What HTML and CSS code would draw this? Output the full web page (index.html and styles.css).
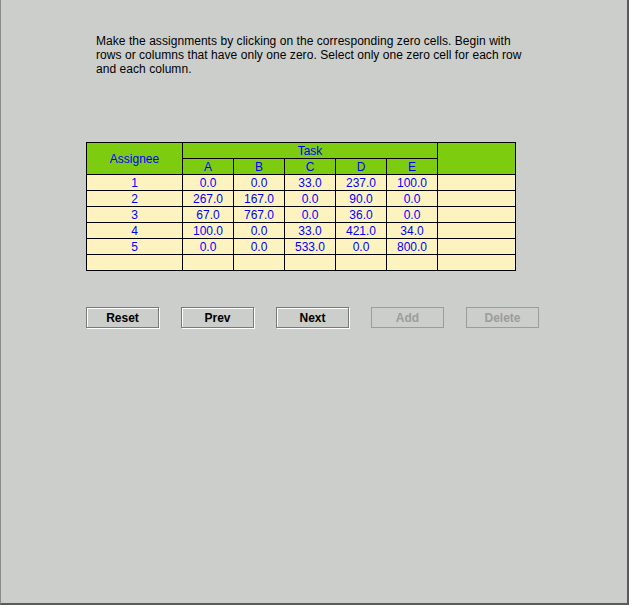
FILE: index.html
```html
<!DOCTYPE html>
<html>
<head>
<meta charset="utf-8">
<link rel="stylesheet" href="styles.css">
</head>
<body>
<div class="frame">
  <p class="intro">Make the assignments by clicking on the corresponding zero cells. Begin with<br>rows or columns that have only one zero. Select only one zero cell for each row<br>and each column.</p>
  <div class="grid">
    <div class="hd assignee">Assignee</div>
    <div class="hd task">Task</div>
    <div class="hd extra"></div>
    <div class="hd">A</div><div class="hd">B</div><div class="hd">C</div><div class="hd">D</div><div class="hd">E</div>

    <div class="c">1</div><div class="c">0.0</div><div class="c">0.0</div><div class="c">33.0</div><div class="c">237.0</div><div class="c">100.0</div><div class="c"></div>
    <div class="c">2</div><div class="c">267.0</div><div class="c">167.0</div><div class="c">0.0</div><div class="c">90.0</div><div class="c">0.0</div><div class="c"></div>
    <div class="c">3</div><div class="c">67.0</div><div class="c">767.0</div><div class="c">0.0</div><div class="c">36.0</div><div class="c">0.0</div><div class="c"></div>
    <div class="c">4</div><div class="c">100.0</div><div class="c">0.0</div><div class="c">33.0</div><div class="c">421.0</div><div class="c">34.0</div><div class="c"></div>
    <div class="c">5</div><div class="c">0.0</div><div class="c">0.0</div><div class="c">533.0</div><div class="c">0.0</div><div class="c">800.0</div><div class="c"></div>
    <div class="c"></div><div class="c"></div><div class="c"></div><div class="c"></div><div class="c"></div><div class="c"></div><div class="c"></div>
  </div>
  <div class="buttons">
    <button class="btn">Reset</button>
    <button class="btn">Prev</button>
    <button class="btn">Next</button>
    <button class="btn disabled">Add</button>
    <button class="btn disabled">Delete</button>
  </div>
</div>
</body>
</html>
```
FILE: styles.css
```css
html, body {
  margin: 0;
  padding: 0;
  background: #cccecb;
}
.frame {
  width: 629px;
  height: 605px;
  box-sizing: border-box;
  background: #cccecb;
  border-left: 1px solid #8a8a8a;
  border-right: 2px solid #5a5a5a;
  border-bottom: 2px solid #5a5a5a;
  padding-top: 34px;
  font-family: "Liberation Sans", Arial, sans-serif;
  font-size: 12px;
  overflow: hidden;
}
.intro {
  margin: 0 0 0 95px;
  line-height: 14px;
  color: #000;
  letter-spacing: 0.05px;
}
.grid {
  margin: 66px 0 0 85px;
  width: 430px;
  display: grid;
  grid-template-columns: 95px 50px 50px 50px 50px 50px 77px;
  grid-template-rows: repeat(8, 15px);
  gap: 1px;
  padding: 1px;
  box-sizing: border-box;
  background: #000;
}
.grid > div {
  color: #0000ff;
  text-align: center;
  line-height: 17px;
  white-space: nowrap;
  overflow: hidden;
}
.hd {
  background: #7ecc10;
}
.assignee {
  grid-row: 1 / 3;
  grid-column: 1;
  display: flex;
  align-items: center;
  justify-content: center;
  padding-top: 1px;
}
.task {
  grid-row: 1;
  grid-column: 2 / 7;
}
.extra {
  grid-row: 1 / 3;
  grid-column: 7;
}
.c {
  background: #fdf3c0;
}
.buttons {
  margin: 36px 0 0 85px;
  display: flex;
  gap: 22px;
}
.btn {
  width: 73px;
  height: 21px;
  margin: 0;
  padding: 1px 0 0 0;
  box-sizing: border-box;
  background: #cccecb;
  border: 1px solid #7a7a7a;
  box-shadow: inset 1px 1px 0 #fff, 1px 1px 0 #fff;
  font-family: "Liberation Sans", Arial, sans-serif;
  font-weight: bold;
  font-size: 12px;
  color: #000;
  line-height: 18px;
}
.btn.disabled {
  border-color: #9c9c9c;
  box-shadow: none;
  color: #9c9c9c;
}
```
